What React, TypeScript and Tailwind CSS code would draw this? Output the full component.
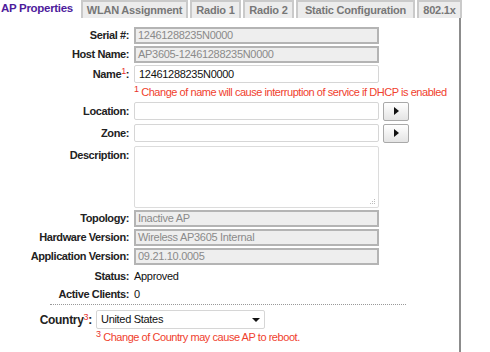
import { useState } from "react";

const tabs = [
  { name: "WLAN Assignment", w: "w-[107px]" },
  { name: "Radio 1", w: "w-[51px]" },
  { name: "Radio 2", w: "w-[51px]" },
  { name: "Static Configuration", w: "w-[119px]" },
  { name: "802.1x", w: "w-[45px]" },
];

function Label({ children }: { children: React.ReactNode }) {
  return (
    <div className="whitespace-nowrap text-right font-bold text-[#222] pr-[5px] leading-none tracking-[-0.4px]">
      {children}
    </div>
  );
}

function ReadOnly({ value }: { value: string }) {
  return (
    <div className="h-[17px] w-[245px] border-2 border-[#b4b4b4] bg-[#eeeeee] px-[2px] leading-[13px] text-[#8a8a8a] tracking-[-0.3px]">
      {value}
    </div>
  );
}

function Editable({ value = "" }: { value?: string }) {
  return (
    <div className="h-[18px] w-[245px] border border-[#d6d6d6] rounded-[2px] bg-white px-[4px] leading-[16px] text-[#111] tracking-[-0.3px]">
      {value}
    </div>
  );
}

function ArrowButton() {
  return (
    <button className="ml-[4px] flex h-[19px] w-[26px] items-center justify-center rounded-[2px] border border-[#a9a9a9] bg-gradient-to-b from-white to-[#e4e4e4]">
      <svg width="5" height="8" viewBox="0 0 5 8">
        <path d="M0 0 L5 4 L0 8 Z" fill="#111" />
      </svg>
    </button>
  );
}

function Sup({ n }: { n: string }) {
  return <span className="relative -top-[4px] text-[9px] font-normal text-[#e8322b]">{n}</span>;
}

export default function App() {
  const [active] = useState("AP Properties");

  return (
    <div className="w-[490px] h-[352px] overflow-hidden bg-white text-[11px] font-['Liberation_Sans',Arial,sans-serif]">
      <div className="flex h-[18px] items-stretch">
        <div className="flex w-[79px] items-center pl-[1px] text-[11.5px] font-bold tracking-[-0.3px] text-[#4e1c9c] whitespace-nowrap">
          {active}
        </div>
        {tabs.map((t) => (
          <div
            key={t.name}
            className={`${t.w} ml-[2px] flex items-center justify-center whitespace-nowrap border-2 border-b-0 border-[#cacaca] bg-[#ececec] text-[11px] font-bold tracking-[-0.2px] text-[#777]`}
          >
            {t.name}
          </div>
        ))}
      </div>

      <div className="w-[461px] border-r-2 border-[#8c8c8c] h-[334px]">
        <div className="grid grid-cols-[134px_auto] items-center gap-y-[2px] pt-[9px]">
          <Label>Serial #:</Label>
          <ReadOnly value="12461288235N0000" />
          <Label>Host Name:</Label>
          <ReadOnly value="AP3605-12461288235N0000" />
          <Label>
            Name<Sup n="1" />:
          </Label>
          <Editable value="12461288235N0000" />
          <div />
          <div className="h-[14px] text-[#f0412e] whitespace-nowrap tracking-[-0.45px] leading-[14px]">
            <Sup n="1" /> Change of name will cause interruption of service if DHCP is enabled
          </div>
          <Label>Location:</Label>
          <div className="flex h-[20px] items-center">
            <Editable />
            <ArrowButton />
          </div>
          <Label>Zone:</Label>
          <div className="flex h-[20px] items-center">
            <Editable />
            <ArrowButton />
          </div>
          <div className="self-start pt-[5px]">
            <Label>Description:</Label>
          </div>
          <div className="relative mt-[1px] h-[62px] w-[245px] border border-[#dcdcdc] rounded-[2px] bg-white">
            <svg className="absolute right-[2px] bottom-[2px]" width="7" height="7" viewBox="0 0 7 7">
              <rect x="5" y="1" width="1" height="1" fill="#bbb" />
              <rect x="3" y="3" width="1" height="1" fill="#bbb" />
              <rect x="5" y="3" width="1" height="1" fill="#bbb" />
              <rect x="1" y="5" width="1" height="1" fill="#bbb" />
              <rect x="3" y="5" width="1" height="1" fill="#bbb" />
              <rect x="5" y="5" width="1" height="1" fill="#bbb" />
            </svg>
          </div>
          <Label>Topology:</Label>
          <ReadOnly value="Inactive AP" />
          <Label>Hardware Version:</Label>
          <ReadOnly value="Wireless AP3605 Internal" />
          <Label>Application Version:</Label>
          <ReadOnly value="09.21.10.0005" />
          <div className="flex h-[18px] items-center justify-end">
            <Label>Status:</Label>
          </div>
          <div className="text-[#111] leading-none tracking-[-0.3px]">Approved</div>
          <div className="flex h-[14px] items-center justify-end">
            <Label>Active Clients:</Label>
          </div>
          <div className="text-[#111] leading-none">0</div>
        </div>

        <div className="ml-[50px] mt-[3px] w-[356px] border-t border-dotted border-[#999]" />

        <div className="mt-[5px] flex items-center">
          <div className="w-[96px] pr-[4px] text-right text-[12px] font-bold tracking-[-0.3px] text-[#222]">
            Country<Sup n="3" />:
          </div>
          <div className="flex h-[19px] w-[169px] items-center justify-between border border-[#d6d6d6] rounded-[2px] bg-white px-[4px] text-[#111] tracking-[-0.3px]">
            <span>United States</span>
            <svg width="8" height="4" viewBox="0 0 8 4">
              <path d="M0 0 L8 0 L4 4 Z" fill="#111" />
            </svg>
          </div>
        </div>
        <div className="ml-[96px] text-[#f0412e] tracking-[-0.45px]">
          <Sup n="3" /> Change of Country may cause AP to reboot.
        </div>
      </div>
    </div>
  );
}
